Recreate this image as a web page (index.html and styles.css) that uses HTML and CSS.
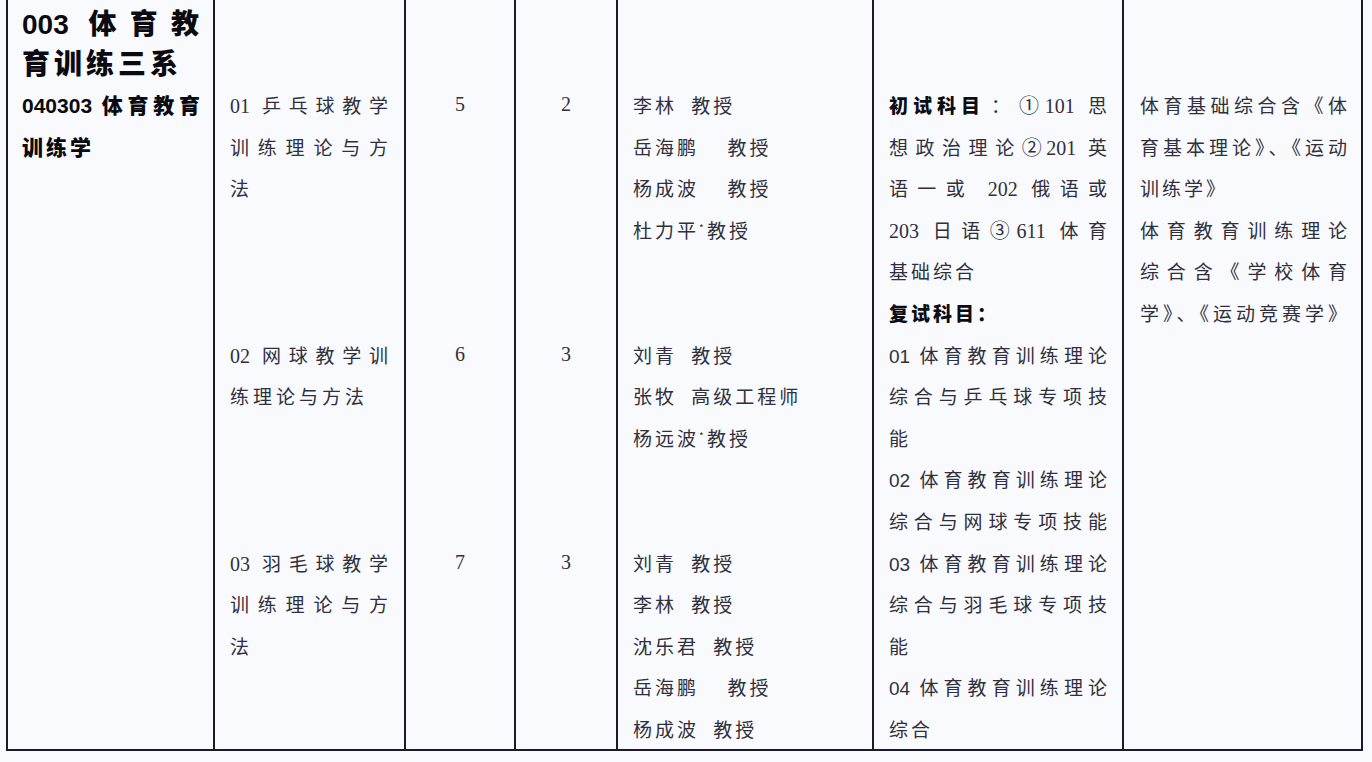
FILE: index.html
```html
<!DOCTYPE html>
<html lang="zh-CN">
<head>
<meta charset="utf-8">
<title>体育教育训练学</title>
<link rel="stylesheet" href="styles.css">
</head>
<body>
<div class="table">
  <div class="cell c1">
    <div class="h1 ln j"><span class="lat">003</span> 体育教</div>
    <div class="h1 ln">育训练三系</div>
    <div class="h2 ln j first"><span class="lat">040303</span> 体育教育</div>
    <div class="h2 ln">训练学</div>
  </div>

  <div class="cell c2">
    <div class="blk r6">
      <div class="ln j"><span class="num">01</span> 乒乓球教学</div>
      <div class="ln j">训练理论与方</div>
      <div class="ln">法</div>
    </div>
    <div class="blk r5">
      <div class="ln j"><span class="num">02</span> 网球教学训</div>
      <div class="ln">练理论与方法</div>
    </div>
    <div class="blk r5">
      <div class="ln j"><span class="num">03</span> 羽毛球教学</div>
      <div class="ln j">训练理论与方</div>
      <div class="ln">法</div>
    </div>
  </div>

  <div class="cell c3">
    <div class="blk r6"><div class="ln num">5</div></div>
    <div class="blk r5"><div class="ln num">6</div></div>
    <div class="blk r5"><div class="ln num">7</div></div>
  </div>

  <div class="cell c4">
    <div class="blk r6"><div class="ln num">2</div></div>
    <div class="blk r5"><div class="ln num">3</div></div>
    <div class="blk r5"><div class="ln num">3</div></div>
  </div>

  <div class="cell c5">
    <div class="blk r6">
      <div class="ln">李林 教授</div>
      <div class="ln">岳海鹏  教授</div>
      <div class="ln">杨成波  教授</div>
      <div class="ln">杜力平<span class="star">*</span>教授</div>
    </div>
    <div class="blk r5">
      <div class="ln">刘青 教授</div>
      <div class="ln">张牧 高级工程师</div>
      <div class="ln">杨远波<span class="star">*</span>教授</div>
    </div>
    <div class="blk r5">
      <div class="ln">刘青 教授</div>
      <div class="ln">李林 教授</div>
      <div class="ln">沈乐君 教授</div>
      <div class="ln">岳海鹏  教授</div>
      <div class="ln">杨成波 教授</div>
    </div>
  </div>

  <div class="cell c6">
    <div class="ln j"><b class="ib">初试科目</b>：<span class="num">①101</span> 思</div>
    <div class="ln j">想政治理论<span class="num">②201</span> 英</div>
    <div class="ln j">语一或 <span class="num">202</span> 俄语或</div>
    <div class="ln j"><span class="num">203</span> 日语<span class="num">③611</span> 体育</div>
    <div class="ln">基础综合</div>
    <div class="ln"><b>复试科目：</b></div>
    <div class="ln j"><span class="sn">01</span> 体育教育训练理论</div>
    <div class="ln j">综合与乒乓球专项技</div>
    <div class="ln">能</div>
    <div class="ln j"><span class="sn">02</span> 体育教育训练理论</div>
    <div class="ln j">综合与网球专项技能</div>
    <div class="ln j"><span class="sn">03</span> 体育教育训练理论</div>
    <div class="ln j">综合与羽毛球专项技</div>
    <div class="ln">能</div>
    <div class="ln j"><span class="sn">04</span> 体育教育训练理论</div>
    <div class="ln">综合</div>
  </div>

  <div class="cell c7">
    <div class="ln j">体育基础综合含《体</div>
    <div class="ln j">育基本理论》、《运动</div>
    <div class="ln wide">训练学》</div>
    <div class="ln j">体育教育训练理论</div>
    <div class="ln j">综合含《学校体育</div>
    <div class="ln j">学》、《运动竞赛学》</div>
  </div>
</div>
</body>
</html>
```

FILE: styles.css
```css
html, body {
  margin: 0;
  padding: 0;
}

body {
  width: 1372px;
  height: 762px;
  overflow: hidden;
  background: #f8fafd;
  color: #30303c;
  font-family: "Noto Sans CJK SC", sans-serif;
  font-size: 19px;
}

.table {
  display: grid;
  grid-template-columns: 209px 191px 110px 102px 256px 250px 239px;
  width: 1357px;
  height: 751px;
  margin-left: 6px;
  border-bottom: 2px solid #1b1a2c;
  box-sizing: border-box;
}

.cell {
  border-right: 2px solid #1b1a2c;
  padding-top: 84px;
  box-sizing: border-box;
  line-height: 41.6px;
  min-width: 0;
}

.ln {
  height: 41.6px;
  white-space: pre;
}

.j {
  text-align: justify;
  text-align-last: justify;
}

.blk.r6 { height: 249.6px; }
.blk.r5 { height: 208px; }

.num {
  font-family: "Liberation Serif", "Noto Sans CJK SC", serif;
  font-size: 20px;
  letter-spacing: 0;
}

.sn {
  font-family: "Liberation Sans", "Noto Sans CJK SC", sans-serif;
  font-size: 19px;
  letter-spacing: 0;
}

b {
  font-weight: 900;
  color: #0c0c12;
}

.ib {
  display: inline-block;
  letter-spacing: 5px;
}

/* column 1 */
.c1 {
  border-left: 2px solid #1b1a2c;
  padding: 2px 10px 0 14px;
  color: #0a0a10;
}

.h1 {
  font-size: 28px;
  font-weight: 900;
  line-height: 40px;
  height: 40px;
  letter-spacing: 4px;
}

.h2 {
  font-size: 21px;
  font-weight: 900;
  letter-spacing: 3px;
}

.h2.first {
  margin-top: 2px;
}

.lat {
  font-family: "Liberation Sans", "Noto Sans CJK SC", sans-serif;
  font-weight: 700;
  letter-spacing: 0;
}

/* column 2 */
.c2 {
  padding-left: 15px;
  padding-right: 12px;
  letter-spacing: 4px;
}

/* columns 3 & 4 */
.c3, .c4 {
  text-align: center;
}

/* column 5 */
.c5 {
  padding-left: 15px;
  letter-spacing: 3px;
  word-spacing: 7px;
}

.star {
  display: inline-block;
  width: 8px;
  font-size: 10px;
  letter-spacing: 0;
  vertical-align: 6px;
  line-height: 1;
}

/* column 6 */
.c6 {
  padding-left: 15px;
  padding-right: 12px;
  letter-spacing: 3px;
}

/* column 7 */
.c7 {
  padding-left: 16px;
  padding-right: 13px;
  letter-spacing: 1px;
}

.c7 .wide {
  letter-spacing: 3px;
}
```
